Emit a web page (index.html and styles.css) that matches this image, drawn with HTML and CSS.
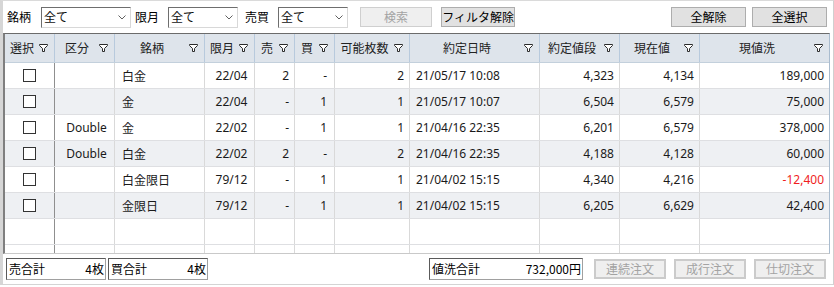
FILE: index.html
```html
<!DOCTYPE html>
<html lang="ja">
<head>
<meta charset="utf-8">
<link rel="stylesheet" href="styles.css">
</head>
<body>
<div class="window">
  <div class="toolbar">
    <span class="lbl">銘柄</span>
    <div class="select w90"><span>全て</span><svg class="chev" width="8" height="5" viewBox="0 0 8 5"><path d="M0.5 0.5L4 4L7.5 0.5" fill="none" stroke="#606060" stroke-width="1"/></svg></div>
    <span class="lbl l2">限月</span>
    <div class="select w70"><span>全て</span><svg class="chev" width="8" height="5" viewBox="0 0 8 5"><path d="M0.5 0.5L4 4L7.5 0.5" fill="none" stroke="#606060" stroke-width="1"/></svg></div>
    <span class="lbl l3">売買</span>
    <div class="select w70"><span>全て</span><svg class="chev" width="8" height="5" viewBox="0 0 8 5"><path d="M0.5 0.5L4 4L7.5 0.5" fill="none" stroke="#606060" stroke-width="1"/></svg></div>
    <button class="btn disabled b-search">検索</button>
    <button class="btn b-filter">フィルタ解除</button>
    <span class="spacer"></span>
    <button class="btn b-all">全解除</button>
    <button class="btn b-all b-last">全選択</button>
  </div>

  <div class="grid">
    <div class="row head">
      <div class="hc"><span class="ht">選択</span><svg class="fi" width="9" height="8" viewBox="0 0 9 8"><path d="M0.5 0.5H8.5V1.5L5.5 4.5V7.5H3.5V4.5L0.5 1.5Z" fill="#fff" stroke="#2b2b2b" stroke-width="1"/></svg></div>
      <div class="hc"><span class="ht">区分</span><svg class="fi" width="9" height="8" viewBox="0 0 9 8"><path d="M0.5 0.5H8.5V1.5L5.5 4.5V7.5H3.5V4.5L0.5 1.5Z" fill="#fff" stroke="#2b2b2b" stroke-width="1"/></svg></div>
      <div class="hc"><span class="ht">銘柄</span><svg class="fi" width="9" height="8" viewBox="0 0 9 8"><path d="M0.5 0.5H8.5V1.5L5.5 4.5V7.5H3.5V4.5L0.5 1.5Z" fill="#fff" stroke="#2b2b2b" stroke-width="1"/></svg></div>
      <div class="hc"><span class="ht">限月</span><svg class="fi" width="9" height="8" viewBox="0 0 9 8"><path d="M0.5 0.5H8.5V1.5L5.5 4.5V7.5H3.5V4.5L0.5 1.5Z" fill="#fff" stroke="#2b2b2b" stroke-width="1"/></svg></div>
      <div class="hc"><span class="ht">売</span><svg class="fi" width="9" height="8" viewBox="0 0 9 8"><path d="M0.5 0.5H8.5V1.5L5.5 4.5V7.5H3.5V4.5L0.5 1.5Z" fill="#fff" stroke="#2b2b2b" stroke-width="1"/></svg></div>
      <div class="hc"><span class="ht">買</span><svg class="fi" width="9" height="8" viewBox="0 0 9 8"><path d="M0.5 0.5H8.5V1.5L5.5 4.5V7.5H3.5V4.5L0.5 1.5Z" fill="#fff" stroke="#2b2b2b" stroke-width="1"/></svg></div>
      <div class="hc"><span class="ht">可能枚数</span><svg class="fi" width="9" height="8" viewBox="0 0 9 8"><path d="M0.5 0.5H8.5V1.5L5.5 4.5V7.5H3.5V4.5L0.5 1.5Z" fill="#fff" stroke="#2b2b2b" stroke-width="1"/></svg></div>
      <div class="hc"><span class="ht">約定日時</span><svg class="fi" width="9" height="8" viewBox="0 0 9 8"><path d="M0.5 0.5H8.5V1.5L5.5 4.5V7.5H3.5V4.5L0.5 1.5Z" fill="#fff" stroke="#2b2b2b" stroke-width="1"/></svg></div>
      <div class="hc"><span class="ht">約定値段</span><svg class="fi" width="9" height="8" viewBox="0 0 9 8"><path d="M0.5 0.5H8.5V1.5L5.5 4.5V7.5H3.5V4.5L0.5 1.5Z" fill="#fff" stroke="#2b2b2b" stroke-width="1"/></svg></div>
      <div class="hc"><span class="ht">現在値</span><svg class="fi" width="9" height="8" viewBox="0 0 9 8"><path d="M0.5 0.5H8.5V1.5L5.5 4.5V7.5H3.5V4.5L0.5 1.5Z" fill="#fff" stroke="#2b2b2b" stroke-width="1"/></svg></div>
      <div class="hc"><span class="ht">現値洗</span><svg class="fi" width="9" height="8" viewBox="0 0 9 8"><path d="M0.5 0.5H8.5V1.5L5.5 4.5V7.5H3.5V4.5L0.5 1.5Z" fill="#fff" stroke="#2b2b2b" stroke-width="1"/></svg></div>
    </div>

    <div class="row">
      <div class="c cb"><span class="box"></span></div><div class="c ctr"></div><div class="c jp">白金</div><div class="c ctr">22/04</div><div class="c r">2</div><div class="c r r6">-</div><div class="c r">2</div><div class="c l">21/05/17 10:08</div><div class="c r">4,323</div><div class="c r">4,134</div><div class="c r">189,000</div>
    </div>
    <div class="row alt">
      <div class="c cb"><span class="box"></span></div><div class="c ctr"></div><div class="c jp">金</div><div class="c ctr">22/04</div><div class="c r">-</div><div class="c r r6">1</div><div class="c r">1</div><div class="c l">21/05/17 10:07</div><div class="c r">6,504</div><div class="c r">6,579</div><div class="c r">75,000</div>
    </div>
    <div class="row">
      <div class="c cb"><span class="box"></span></div><div class="c ctr">Double</div><div class="c jp">金</div><div class="c ctr">22/02</div><div class="c r">-</div><div class="c r r6">1</div><div class="c r">1</div><div class="c l">21/04/16 22:35</div><div class="c r">6,201</div><div class="c r">6,579</div><div class="c r">378,000</div>
    </div>
    <div class="row alt">
      <div class="c cb"><span class="box"></span></div><div class="c ctr">Double</div><div class="c jp">白金</div><div class="c ctr">22/02</div><div class="c r">2</div><div class="c r r6">-</div><div class="c r">2</div><div class="c l">21/04/16 22:35</div><div class="c r">4,188</div><div class="c r">4,128</div><div class="c r">60,000</div>
    </div>
    <div class="row">
      <div class="c cb"><span class="box"></span></div><div class="c ctr"></div><div class="c jp">白金限日</div><div class="c ctr">79/12</div><div class="c r">-</div><div class="c r r6">1</div><div class="c r">1</div><div class="c l">21/04/02 15:15</div><div class="c r">4,340</div><div class="c r">4,216</div><div class="c r neg">-12,400</div>
    </div>
    <div class="row alt">
      <div class="c cb"><span class="box"></span></div><div class="c ctr"></div><div class="c jp">金限日</div><div class="c ctr">79/12</div><div class="c r">-</div><div class="c r r6">1</div><div class="c r">1</div><div class="c l">21/04/02 15:15</div><div class="c r">6,205</div><div class="c r">6,629</div><div class="c r">42,400</div>
    </div>
    <div class="row">
      <div class="c cb"></div><div class="c"></div><div class="c"></div><div class="c"></div><div class="c"></div><div class="c"></div><div class="c"></div><div class="c"></div><div class="c"></div><div class="c"></div><div class="c"></div>
    </div>
    <div class="row part">
      <div class="c cb"></div><div class="c"></div><div class="c"></div><div class="c"></div><div class="c"></div><div class="c"></div><div class="c"></div><div class="c"></div><div class="c"></div><div class="c"></div><div class="c"></div>
    </div>
  </div>

  <div class="footer">
    <div class="sum w100"><span>売合計</span><span>4枚</span></div>
    <div class="sum w100 s2"><span>買合計</span><span>4枚</span></div>
    <span class="spacer"></span>
    <div class="sum w154"><span>値洗合計</span><span>732,000円</span></div>
    <button class="btn fb">連続注文</button>
    <button class="btn fb">成行注文</button>
    <button class="btn fb">仕切注文</button>
  </div>
</div>
</body>
</html>
```

FILE: styles.css
```css
* { box-sizing: border-box; }
html, body { margin: 0; padding: 0; background: #fff; }
body {
  width: 834px;
  height: 287px;
  overflow: hidden;
  font-family: "Noto Sans CJK JP", "Noto Sans", sans-serif;
  font-size: 12px;
  color: #111;
}
.window {
  width: 834px;
  height: 285px;
  border-top: 1px solid #dadada;
  border-left: 3px solid #d6d6d6;
  border-right: 1px solid #d0d0d0;
  border-bottom: 1px solid #d4d4d4;
  padding-right: 3px;
  display: flex;
  flex-direction: column;
}
.toolbar {
  height: 32px;
  display: flex;
  align-items: center;
  padding-left: 4px;
  padding-right: 0;
}
.lbl { font-size: 12px; line-height: 14px; color: #000; margin-right: 10px; }
.lbl.l2 { margin-left: 4px; margin-right: 9px; }
.lbl.l3 { margin-left: 7px; margin-right: 9px; }
.select {
  height: 21px;
  border: 1px solid;
  border-color: #6e6e6e #d8d8d8 #d8d8d8 #6e6e6e;
  background: #fff;
  display: flex;
  align-items: center;
  padding-left: 2px;
  padding-right: 4px;
  font-size: 12px;
}
.select span { flex: 1; line-height: 14px; }
.select.w90 { width: 90px; }
.select.w70 { width: 70px; }
.chev { flex: none; }
.spacer { flex: 1; }
.btn {
  font-family: "Noto Sans CJK JP", sans-serif;
  font-size: 12px;
  line-height: 14px;
  height: 20px;
  padding: 0;
  background: #e1e1e1;
  border: 1px solid #adadad;
  color: #000;
}
.btn.disabled { background: #efefef; border-color: #cfcfcf; color: #a3a3a3; }
.b-search { width: 72px; margin-left: 12px; }
.b-filter { width: 74px; margin-left: 9px; }
.b-all { width: 75px; }
.b-last { margin-left: 6px; margin-right: 3px; }

.grid {
  border-top: 1px solid #6b6b6b;
  border-left: 2px solid #7f7f7f;
  border-right: 1px solid #a9bccf;
  border-bottom: 1px solid #c9c9c9;
  height: 221px;
  overflow: hidden;
  width: 827px;
}
.row {
  display: grid;
  grid-template-columns: 50px 60px 90px 50px 40px 40px 75px 130px 80px 80px 129px;
  height: 26px;
  border-bottom: 1px solid #dedfe2;
}
.row.alt { background: #eef0f3; }
.row.part { height: 8px; border-bottom: none; }
.row.head {
  height: 29px;
  background: #dee4eb;
  border-bottom: 1px solid #c3d0dc;
}
.hc {
  display: flex;
  align-items: center;
  border-right: 1px solid #b8cadd;
  padding-right: 6px;
  font-size: 12px;
  color: #222;
}
.hc:last-child { border-right: none; }
.ht { flex: 1; text-align: center; line-height: 14px; }
.fi { flex: none; }
.c {
  border-right: 1px solid #d9d9d9;
  display: flex;
  align-items: center;
  font-family: "Noto Sans", "Noto Sans CJK JP", sans-serif;
  font-size: 12px;
  color: #1a1a1a;
  white-space: nowrap;
}
.c:last-child { border-right: none; }
.c.cb { justify-content: center; border-right: 1px solid #8f8f8f; }
.box { width: 13px; height: 13px; border: 1px solid #333; background: #fff; }
.c.ctr { justify-content: center; padding-left: 4px; }
.c.jp { padding-left: 7px; font-family: "Noto Sans CJK JP", sans-serif; }
.c.l { padding-left: 6px; }
.c.r { justify-content: flex-end; padding-right: 5px; }
.c.r.r6 { padding-right: 7px; }
.neg { color: #f01e1e; }

.footer {
  flex: 1;
  display: flex;
  align-items: center;
  padding-left: 3px;
  padding-bottom: 1px;
}
.sum {
  height: 22px;
  border: 1px solid;
  border-color: #5a5a5a #a0a0a0 #a0a0a0 #5a5a5a;
  display: flex;
  align-items: center;
  justify-content: space-between;
  padding: 0 1px 0 2px;
  font-size: 12px;
  color: #000;
  background: #fff;
}
.sum.w100 { width: 100px; }
.sum.s2 { margin-left: 2px; }
.sum.w154 { width: 154px; margin-right: 11px; }
.btn.fb {
  width: 72px;
  height: 20px;
  background: #efefef;
  border: 2px solid #cbcbcb;
  color: #a3a3a3;
  margin-right: 8px;
}
.btn.fb:last-child { margin-right: 4px; }
```
